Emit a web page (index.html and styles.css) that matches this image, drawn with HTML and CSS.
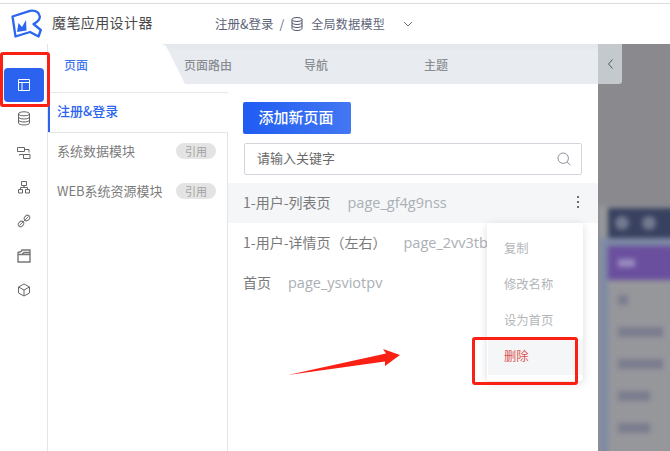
FILE: index.html
```html
<!DOCTYPE html>
<html lang="zh">
<head>
<meta charset="utf-8">
<title>魔笔应用设计器</title>
<link rel="stylesheet" href="styles.css">
</head>
<body>
<div class="app">
  <header class="header">
    <svg class="logo" width="31" height="29" viewBox="0 0 31 29" fill="none">
      <path d="M1.500 7.500 L19 1.800 Q27.500 0.800 28.800 7.500 Q29 12 22.500 15 L29.800 21 L27.500 27.500 L19 23 L4.500 27.500 Z" stroke="#2a66f0" stroke-width="2.300" stroke-linejoin="round"/>
      <path d="M6 23 L7.500 14 L11 18 L15 11 L15.500 21.500 Z" fill="#2a66f0"/>
    </svg>
    <span class="app-name">魔笔应用设计器</span>
    <span class="crumb">注册&amp;登录</span>
    <span class="crumb-sep">/</span>
    <svg class="crumb-db" width="12" height="14" viewBox="0 0 12 14" fill="none" stroke="#4d5468" stroke-width="1">
      <ellipse cx="6" cy="2.500" rx="5" ry="2"/>
      <path d="M1 2.500v9c0 1.100 2.200 2 5 2s5-.9 5-2v-9M1 5.500c0 1.100 2.200 2 5 2s5-.9 5-2M1 8.500c0 1.100 2.200 2 5 2s5-.9 5-2"/>
    </svg>
    <span class="crumb crumb-model">全局数据模型</span>
    <svg class="crumb-chev" width="10" height="6" viewBox="0 0 10 6" fill="none" stroke="#6b7280" stroke-width="1"><path d="M1 1l4 4 4-4"/></svg>
  </header>

  <div class="body">
    <nav class="rail">
      <div class="rail-active">
        <svg width="14" height="14" viewBox="0 0 14 14" fill="none" stroke="#fff" stroke-width="1"><path d="M1.500 1.500h11v11h-11zM1.500 4.500h11M5 4.500v8"/></svg>
      </div>
      <svg class="rail-icon" width="14" height="15" viewBox="0 0 14 15" fill="none" stroke="#666" stroke-width="1"><ellipse cx="7" cy="2.800" rx="5.500" ry="2"/><path d="M1.500 2.800v9.200c0 1.100 2.500 2 5.500 2s5.500-.9 5.500-2V2.800M1.500 6c0 1.100 2.500 2 5.500 2s5.500-.9 5.500-2M1.500 9c0 1.100 2.500 2 5.500 2s5.500-.9 5.500-2"/></svg>
      <svg class="rail-icon" width="14" height="14" viewBox="0 0 14 14" fill="none" stroke="#666" stroke-width="1"><path d="M.5 1.500h7v4h-7zM7.500 3.500h4.500v3M6.500 8.500h6.500v4H6.500zM6.500 8.500h-4v1"/></svg>
      <svg class="rail-icon" width="14" height="14" viewBox="0 0 14 14" fill="none" stroke="#666" stroke-width="1"><path d="M4.500 1.500h5v4h-5zM1.500 9.500h4v3.500h-4zM8.500 9.500h4v3.500h-4zM7 5.500v2M3.500 9.500v-2h7v2"/></svg>
      <svg class="rail-icon" width="14" height="14" viewBox="0 0 14 14" fill="none" stroke="#777" stroke-width="1"><ellipse cx="4" cy="10" rx="3" ry="2.400" transform="rotate(-45 4 10)"/><ellipse cx="10" cy="4" rx="3" ry="2.400" transform="rotate(-45 10 4)"/><path d="M2.500 11.500l9-9"/></svg>
      <svg class="rail-icon" width="14" height="15" viewBox="0 0 14 15" fill="none" stroke="#777" stroke-width="1.400"><path d="M1 6.500h12v7.500H1zM1 6.500v-2l4-1.500M5 3v-1h8v4.500M5 6.500l2-2h6"/></svg>
      <svg class="rail-icon" width="14" height="14" viewBox="0 0 14 14" fill="none" stroke="#666" stroke-width="1"><path d="M7 1l5.500 3v6L7 13l-5.500-3V4zM1.500 4L7 7l5.500-3M7 7v6"/></svg>
    </nav>

    <section class="panel">
      <div class="tabs">
        <div class="tab tab-active">页面</div>
        <div class="tab tab-route">页面路由</div>
        <div class="tab tab-nav">导航</div>
        <div class="tab tab-theme">主题</div>
      </div>
      <div class="content">
        <aside class="modules">
          <div class="module module-active">注册&amp;登录</div>
          <div class="module-rest">
            <div class="module"><span>系统数据模块</span><span class="tag">引用</span></div>
            <div class="module"><span>WEB系统资源模块</span><span class="tag">引用</span></div>
          </div>
        </aside>
        <main class="pages">
          <button class="add-btn">添加新页面</button>
          <div class="search">
            <span class="search-text">请输入关键字</span>
            <svg width="14" height="14" viewBox="0 0 14 14" fill="none" stroke="#8a8f99" stroke-width="1"><circle cx="6.200" cy="6.200" r="5.200"/><path d="M10 10l3.300 3"/></svg>
          </div>
          <ul class="page-list">
            <li class="page-row page-row-hover">
              <span class="page-name">1-用户-列表页</span><span class="page-id">page_gf4g9nss</span>
              <span class="more"><i></i><i></i><i></i></span>
            </li>
            <li class="page-row"><span class="page-name">1-用户-详情页（左右）</span><span class="page-id">page_2vv3tb</span></li>
            <li class="page-row"><span class="page-name">首页</span><span class="page-id">page_ysviotpv</span></li>
          </ul>
        </main>
      </div>
    </section>

    <div class="preview">
      <div class="handle"><svg width="7" height="10" viewBox="0 0 7 10" fill="none" stroke="#555b60" stroke-width="1"><path d="M5.500 .5L1.500 5l4 4.500"/></svg></div>
      <div class="blur">
        <div class="blur-top"><span class="dot"></span><span class="dot"></span></div>
        <div class="blur-body">
          <div class="blur-purple"><span class="blur-text"></span></div>
          <div class="blur-line w1"></div>
          <div class="blur-line w2"></div>
          <div class="blur-line w2"></div>
          <div class="blur-line w3"></div>
          <div class="blur-line w3"></div>
        </div>
      </div>
    </div>
  </div>

  <div class="menu">
    <div class="menu-item">复制</div>
    <div class="menu-item">修改名称</div>
    <div class="menu-item">设为首页</div>
    <div class="menu-item menu-danger">删除</div>
  </div>

  <div class="mark mark-rail"></div>
  <div class="mark mark-delete"></div>
  <svg class="arrow" width="116" height="30" viewBox="0 0 116 30"><path d="M0 28 L98 6.500 L95 2 L112 8 L97 19 L97 14.500 Z" fill="#fa2014"/></svg>
</div>
</body>
</html>
```
FILE: styles.css
```css
* { box-sizing: border-box; }
html, body { margin: 0; padding: 0; }
body { font-family: "Noto Sans CJK SC", "Noto Sans", sans-serif; background: #fff; overflow: hidden; }
.app { position: relative; width: 670px; height: 451px; overflow: hidden; background: #fff; }

.header { height: 41px; border-top: 1px solid #dcdcdc; margin-top: 3px; display: flex; align-items: center; padding: 0 0 1px 11px; font-size: 12px; }
.logo { margin-right: 10px; flex: none; }
.app-name { font-size: 14px; letter-spacing: .4px; color: #4a4a4a; width: 163px; flex: none; margin-bottom: 3px; }
.crumb { color: #5d6478; font-size: 12.500px; }
.crumb-sep { color: #5d6478; margin: 0 7px 0 6px; }
.crumb-db { margin-right: 8px; }
.crumb-model { font-size: 12px; letter-spacing: .3px; }
.crumb-chev { margin-left: 18px; }

.body { display: flex; height: 407px; }
.rail { width: 48px; flex: none; border-right: 1px solid #e3e5e8; display: flex; flex-direction: column; align-items: center; padding-top: 24px; background: #fff; }
.rail-active { width: 40px; height: 34px; border-radius: 4px; background: #2b63f0; display: flex; align-items: center; justify-content: center; margin-bottom: 9px; align-self: flex-start; margin-left: 4px; }
.rail-icon { margin-bottom: 20px; flex: none; }

.panel { width: 550px; flex: none; display: flex; flex-direction: column; }
.tabs { height: 40px; background: linear-gradient(#e3e6ea, #e8ebf0 8px); position: relative; display: flex; font-size: 12px; font-weight: 500; color: #8a8e92; }
.tab { position: absolute; top: 13px; line-height: 16px; }
.tab-active { left: 0; top: 0; width: 137px; height: 40px; padding: 13px 0 0 16px; background: #fff; color: #3f74ee; clip-path: polygon(0 0, 114px 0, 118px 2px, 137px 40px, 0 40px); }
.tab-route { left: 136px; }
.tab-nav { left: 256px; }
.tab-theme { left: 376px; }

.content { flex: 1; display: flex; min-height: 0; }
.modules { width: 180px; flex: none; padding-top: 8px; display: flex; flex-direction: column; }
.module { height: 40px; display: flex; align-items: center; justify-content: space-between; padding: 0 12px 6px 9px; font-size: 13px; color: #7c7c7c; }
.module-active { border-top: 1px solid #e8e8e8; border-left: 2px solid #2b63f0; padding: 0 12px 4px 7px; color: #2b63f0; font-weight: 500; font-size: 13px; }
.module-rest { flex: 1; border-top: 1px solid #e3e5e8; border-right: 1px solid #e3e5e8; }
.tag { width: 40px; height: 16px; border-radius: 8px; background: #e4e4e4; color: #a3a3a3; font-size: 11px; line-height: 16px; text-align: center; flex: none; margin-right: -1px; position: relative; top: 1px; }

.pages { flex: 1; padding-top: 18px; }
.add-btn { display: block; width: 108px; height: 32px; margin-left: 15px; padding: 0 2px 3px 0; border: 0; border-radius: 2px; background: linear-gradient(90deg, #1f5cf2, #4377f2); color: #fff; font: 500 15px "Noto Sans CJK SC", sans-serif; }
.search { width: 338px; height: 32px; margin: 9px 0 8px 16px; border: 1px solid #d4d5dc; border-radius: 2px; display: flex; align-items: center; justify-content: space-between; padding: 0 10px 0 12px; font-size: 13px; color: #6a6a6a; }
.search-text { margin-bottom: 3px; }
.page-list { list-style: none; margin: 0; padding: 0; }
.page-row { height: 40px; display: flex; align-items: center; padding: 0 0 2px 15px; font-size: 14px; color: #7a7a7a; position: relative; white-space: nowrap; overflow: hidden; }
.page-row-hover { background: #f5f6f8; }
.page-name { margin-right: 17px; }
.page-id { font-family: "Open Sans", "Noto Sans", sans-serif; color: #aab0b6; font-size: 14.500px; }
.more { margin-left: auto; margin-right: 19px; display: flex; flex-direction: column; gap: 3px; }
.more i { display: block; width: 2px; height: 2px; background: #6e6e6e; }

.preview { flex: 1; position: relative; background: #8a8a8e; overflow: hidden; }
.handle { position: absolute; z-index: 2; left: 0; top: 0; width: 24px; height: 40px; background: #c3c9cd; border-bottom-right-radius: 3px; display: flex; align-items: center; justify-content: center; }
.blur { position: absolute; left: 0; top: 162px; width: 80px; height: 260px; background: #96979b; filter: blur(2.500px); display: flex; flex-direction: column; padding-left: 10px; }
.blur-top { height: 30px; margin-top: 2px; background: #38415f; display: flex; align-items: center; gap: 13px; padding-left: 7px; flex: none; }
.dot { width: 14px; height: 14px; border-radius: 50%; background: #737a90; }
.blur-body { flex: 1; margin-left: -8px; padding: 8px 0 0 8px; background: linear-gradient(#7e8aa5, #7e8aa5) left top / 8px 100% no-repeat, linear-gradient(#7e8aa5, #7e8aa5) left top / 100% 8px no-repeat; }
.blur-purple { height: 34px; background: #6a4f9e; margin-bottom: 15px; padding: 13px 0 0 10px; }
.blur-text { display: block; width: 17px; height: 8px; background: #9a8cc0; }
.blur-line { height: 10px; background: #7b7c8e; margin: 0 0 22px 10px; }
.w1 { width: 10px; }
.w2 { width: 45px; }
.w3 { width: 32px; }

.menu { position: absolute; left: 487px; top: 223px; width: 96px; height: 158px; padding-top: 8px; background: #fff; border-radius: 3px; box-shadow: 0 2px 8px rgba(0, 0, 0, .14); }
.menu-item { height: 36px; line-height: 35px; padding-left: 17px; font-size: 12.300px; color: #b3b6b9; }
.menu-danger { color: #d9534f; background: #f5f6f8; margin: 0 0 0 1px; padding-left: 16px; }

.mark { position: absolute; border: 3px solid #fa2014; border-radius: 3px; }
.mark-rail { left: 0; top: 52px; width: 50px; height: 55px; }
.mark-delete { left: 472px; top: 337px; width: 106px; height: 48px; }
.arrow { position: absolute; left: 288px; top: 347px; }
```
